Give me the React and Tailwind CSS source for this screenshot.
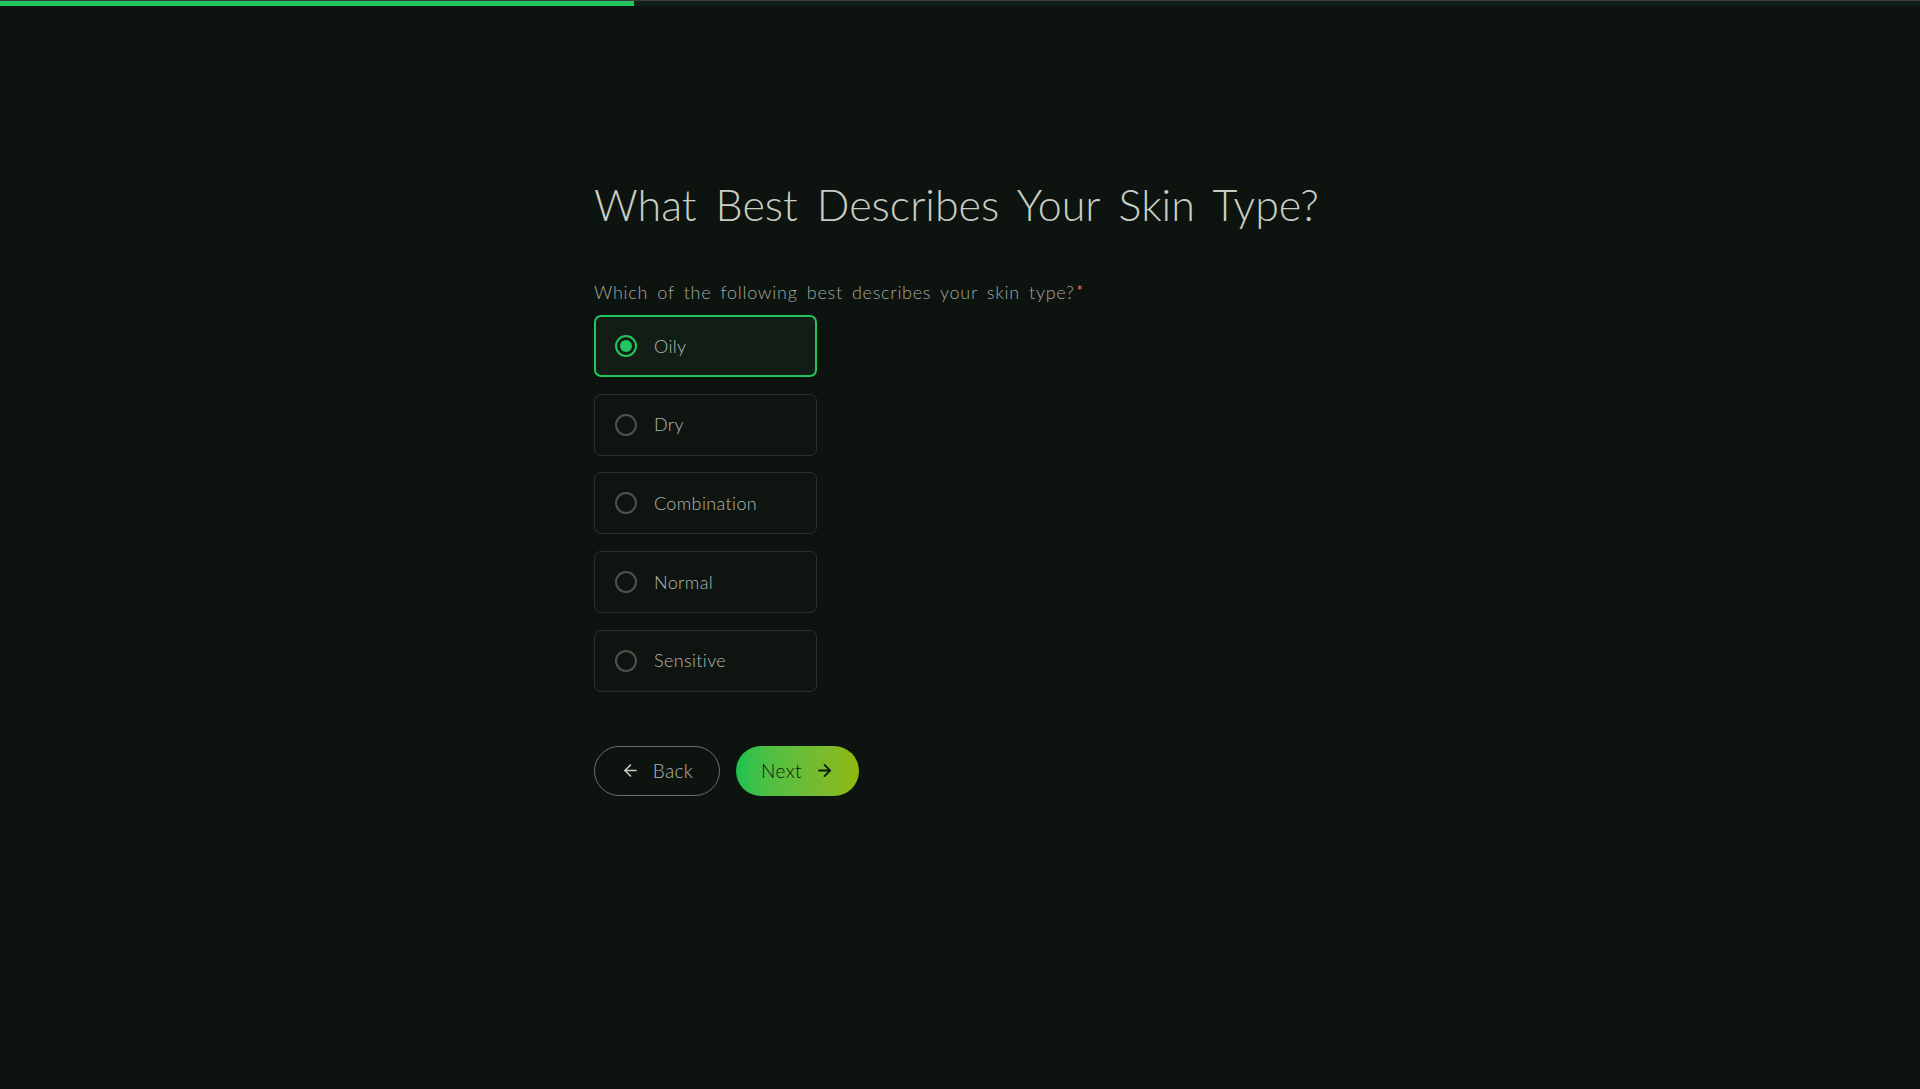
import { useState } from 'react';
import { ArrowLeft, ArrowRight } from 'lucide-react';

const options = ['Oily', 'Dry', 'Combination', 'Normal', 'Sensitive'];

export default function App() {
  const [selected, setSelected] = useState('Oily');

  return (
    <div className="min-h-screen bg-[#0d140f] font-['Lato','Liberation_Sans',sans-serif] font-light">
      {/* Progress */}
      <div className="border-t border-[#3a3e3b] bg-[#0f2118] h-[6px]">
        <div className="h-full w-[33%] bg-[#22c55e]"></div>
      </div>

      <div className="w-[732px] mx-auto pt-[177px]">
        <h1 className="whitespace-nowrap text-[43px] leading-none tracking-normal [word-spacing:0.17em] text-[#c8cec4]">
          What Best Describes Your Skin Type?
        </h1>

        <p className="mt-[57px] text-[18px] leading-none tracking-[0.04em] [word-spacing:0.2em] text-[#a3a8a2]">
          Which of the following best describes your skin type?
          <span className="text-[#f26d87] text-[15px] font-normal align-top ml-[2px]">*</span>
        </p>

        <div className="mt-[14px] flex flex-col gap-[16.7px]">
          {options.map((opt) => {
            const active = selected === opt;
            return (
              <button
                key={opt}
                type="button"
                onClick={() => setSelected(opt)}
                className={`w-[223px] h-[62px] flex items-center gap-[17px] rounded-[7px] text-left transition-colors ${
                  active
                    ? 'border-2 border-[#22c55e] bg-[#121d16] px-[19px]'
                    : 'border border-[#2b312d] bg-[#0e1510] px-[20px]'
                }`}
              >
                <span
                  className={`w-[22px] h-[22px] rounded-full border-2 flex items-center justify-center shrink-0 ${
                    active ? 'border-[#22c55e]' : 'border-[#4c534d]'
                  }`}
                >
                  {active && <span className="w-[12px] h-[12px] rounded-full bg-[#22c55e]"></span>}
                </span>
                <span className="text-[18px] tracking-[0.02em] text-[#b3b8b1]">{opt}</span>
              </button>
            );
          })}
        </div>

        <div className="mt-[54px] flex items-center gap-[16px]">
          <button
            type="button"
            className="w-[126px] h-[50px] rounded-full border-[1.5px] border-[#6a6f6b] flex items-center justify-center gap-[13px] text-[19px] text-[#b3b8b1] tracking-[0.02em]"
          >
            <ArrowLeft size={19} strokeWidth={2} className="text-[#c8ccc6]" />
            Back
          </button>
          <button
            type="button"
            className="w-[123px] h-[50px] rounded-full bg-gradient-to-r from-[#16c24f] to-[#8fb80c] flex items-center justify-center gap-[13px] text-[19px] text-[#0d1a10] tracking-[0.02em]"
          >
            Next
            <ArrowRight size={19} strokeWidth={2.25} />
          </button>
        </div>
      </div>
    </div>
  );
}
